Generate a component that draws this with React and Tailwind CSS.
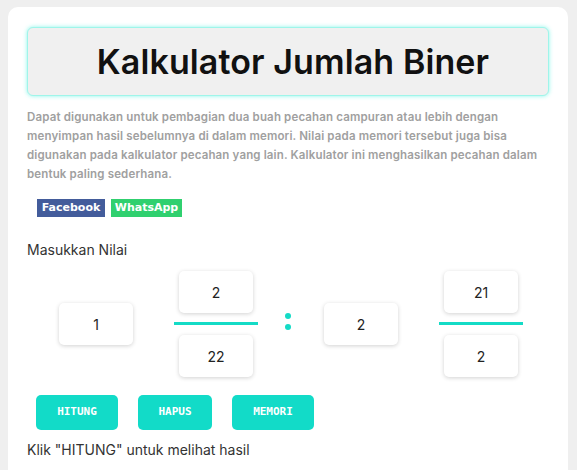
import React from "react";

function Box({ v }) {
  return (
    <div className="w-[74px] h-[42px] bg-white rounded-[5px] shadow-[0_1px_4px_rgba(0,0,0,0.18)] flex items-center justify-center text-[14px] text-[#222] font-['Inter',sans-serif]">
      {v}
    </div>
  );
}

function Frac({ n, d }) {
  return (
    <div className="flex flex-col items-center w-[84px]">
      <Box v={n} />
      <div className="w-[84px] h-[3px] bg-[#14dbc6] mt-[9px] mb-[10px]" />
      <Box v={d} />
    </div>
  );
}

export default function App() {
  return (
    <div className="bg-[#efefef] pt-[7px] pl-[8px] pr-[9px] font-['Inter',sans-serif] overflow-hidden h-[470px]">
      <div className="bg-white rounded-[10px] px-[19px] pt-[20px] pb-[40px] h-[600px]">
        <div className="h-[69px] rounded-[6px] bg-[#f0f0f0] border border-[#9ff5ea] shadow-[0_0_4px_rgba(60,240,220,0.6)] flex items-center justify-center">
          <h1 className="text-[34px] font-semibold text-[#111] tracking-[0.1px] ml-[10px]">Kalkulator Jumlah Biner</h1>
        </div>
        <p className="mt-[12px] text-[11.5px] leading-[19px] font-semibold text-[#a0a0a0] tracking-[0.15px] pr-[10px]">
          Dapat digunakan untuk pembagian dua buah pecahan campuran atau lebih dengan menyimpan hasil sebelumnya di dalam memori. Nilai pada memori tersebut juga bisa digunakan pada kalkulator pecahan yang lain. Kalkulator ini menghasilkan pecahan dalam bentuk paling sederhana.
        </p>
        <div className="flex gap-[6px] mt-[15px] ml-[10px]">
          <span className="bg-[#435c9b] text-white text-[11px] font-bold h-[18px] w-[68px] flex items-center justify-center font-['DejaVu_Sans',sans-serif]">Facebook</span>
          <span className="bg-[#30d06f] text-white text-[11px] font-bold h-[18px] w-[71px] flex items-center justify-center font-['DejaVu_Sans',sans-serif]">WhatsApp</span>
        </div>
        <div className="mt-[22px] text-[14px] text-[#333]">Masukkan Nilai</div>
        <div className="flex items-center mt-[11px]">
          <div className="ml-[32px]"><Box v="1" /></div>
          <div className="ml-[41px]"><Frac n="2" d="22" /></div>
          <div className="ml-[27px] flex flex-col gap-[5px] mt-[-6px]">
            <div className="w-[6px] h-[6px] rounded-full bg-[#14dbc6]" />
            <div className="w-[6px] h-[6px] rounded-full bg-[#14dbc6]" />
          </div>
          <div className="ml-[33px]"><Box v="2" /></div>
          <div className="ml-[41px]"><Frac n="21" d="2" /></div>
        </div>
        <div className="flex mt-[18px] ml-[9px] gap-[20px]">
          <button className="w-[82px] h-[35px] rounded-[5px] bg-[#12dbc8] text-white text-[11px] font-bold font-['DejaVu_Sans_Mono',monospace]">HITUNG</button>
          <button className="w-[74px] h-[35px] rounded-[5px] bg-[#12dbc8] text-white text-[11px] font-bold font-['DejaVu_Sans_Mono',monospace]">HAPUS</button>
          <button className="w-[82px] h-[35px] rounded-[5px] bg-[#12dbc8] text-white text-[11px] font-bold font-['DejaVu_Sans_Mono',monospace]">MEMORI</button>
        </div>
        <div className="mt-[9px] text-[14px] text-[#333]">Klik "HITUNG" untuk melihat hasil</div>
      </div>
    </div>
  );
}
